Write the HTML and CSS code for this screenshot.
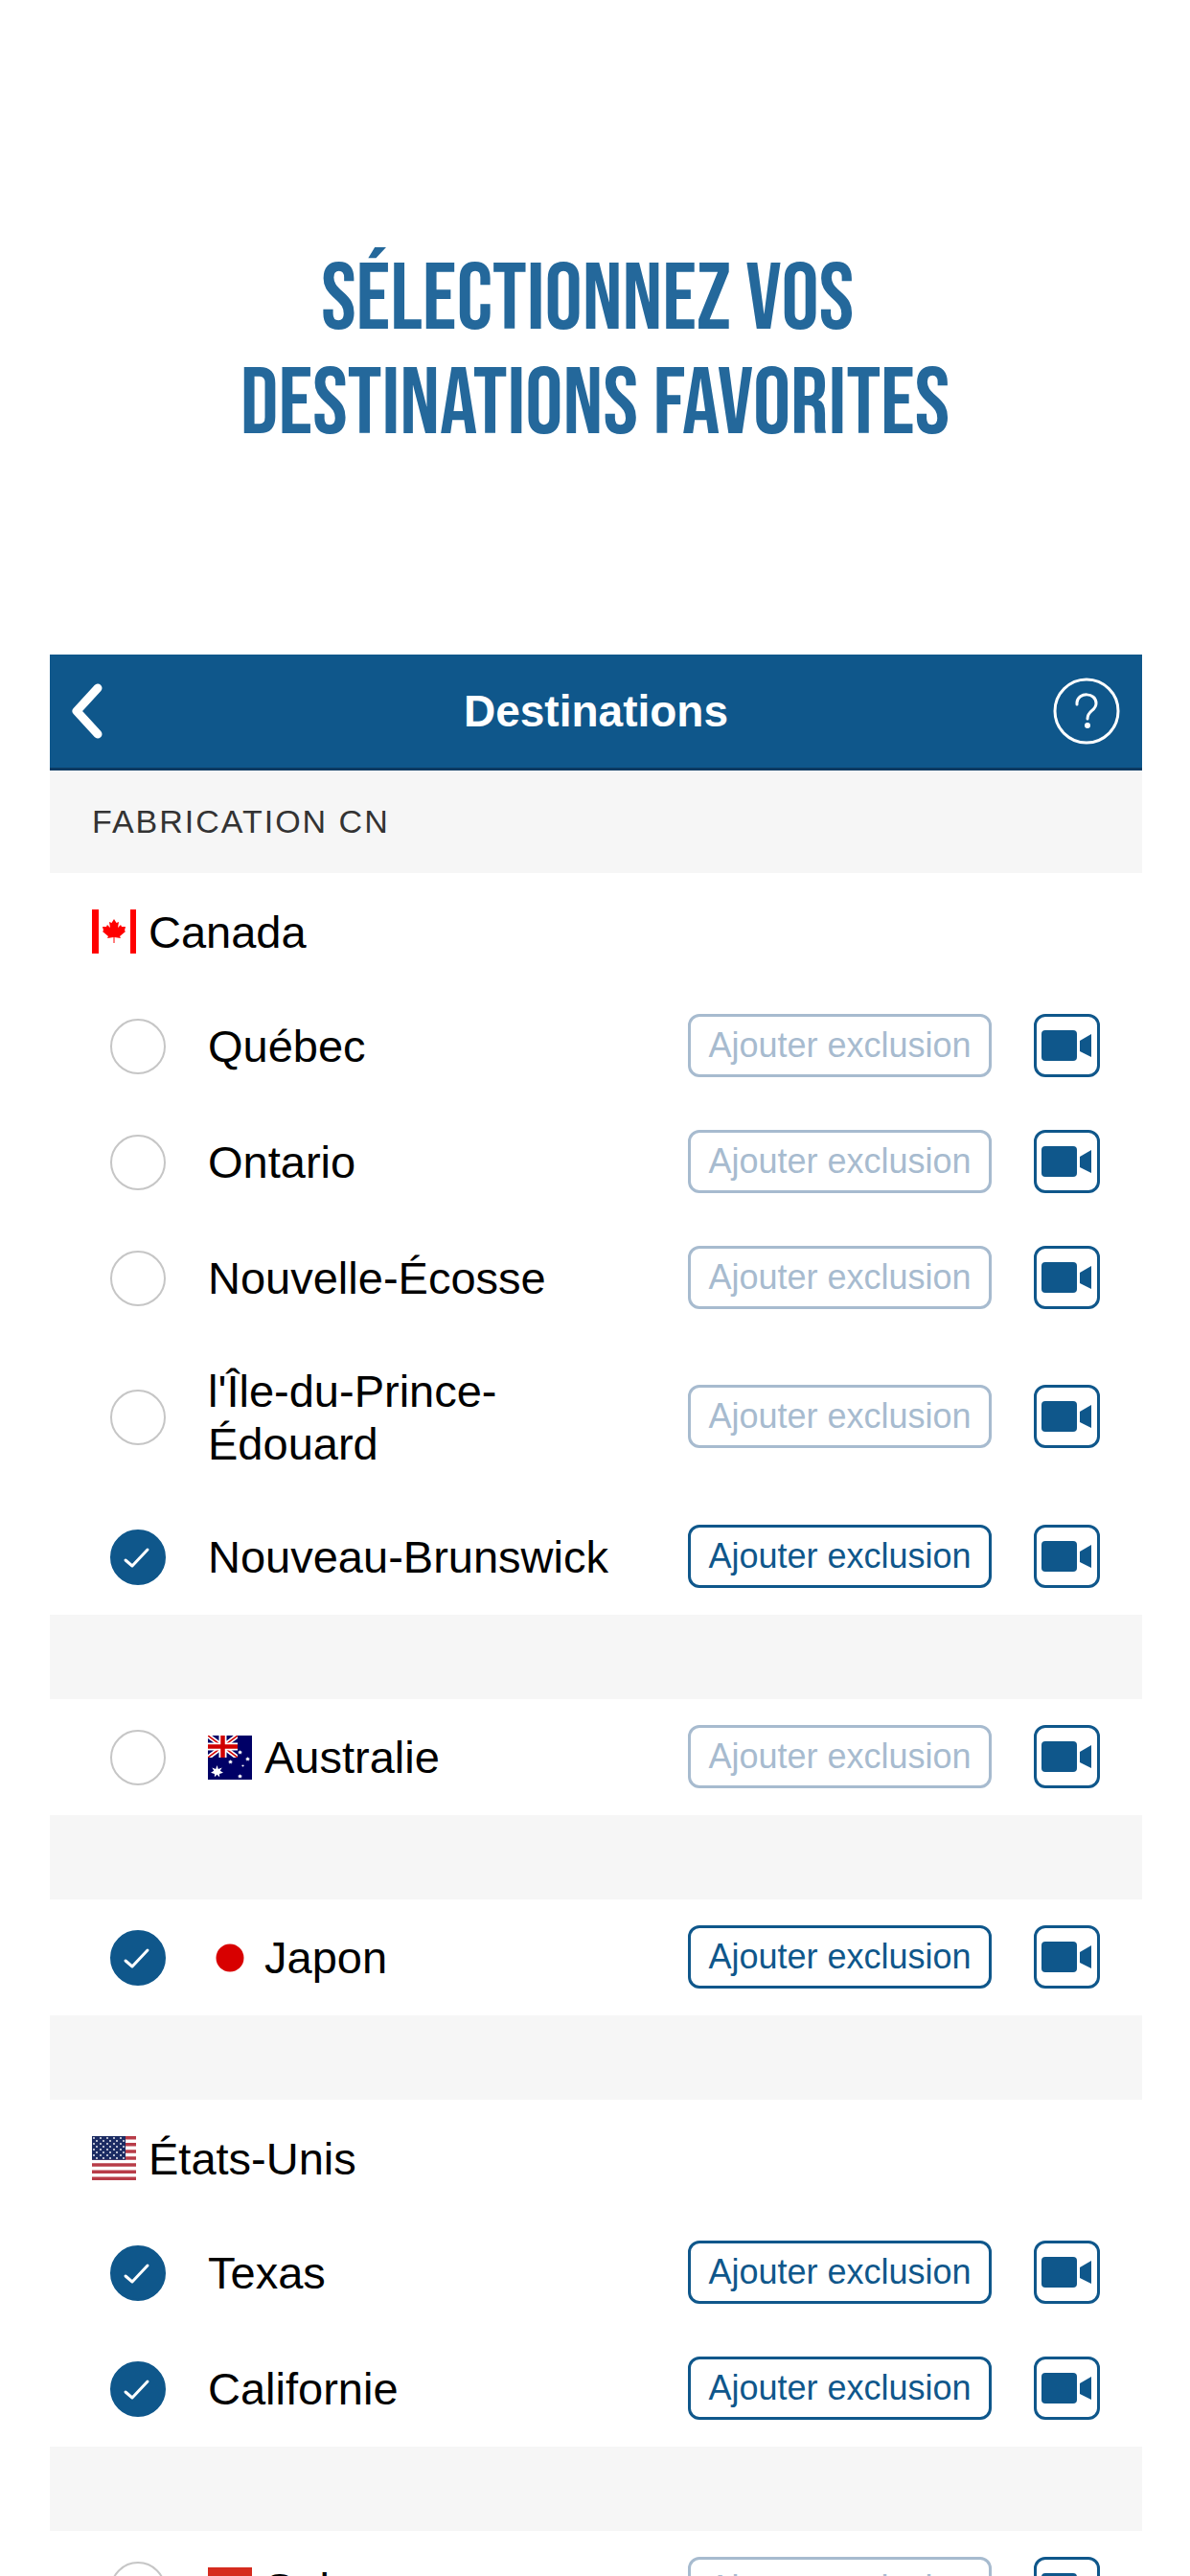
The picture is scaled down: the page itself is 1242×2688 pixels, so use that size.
FILE: index.html
```html
<!DOCTYPE html>
<html lang="fr">
<head>
    <meta charset="UTF-8">
    <meta name="viewport" content="width=device-width, initial-scale=1.0">
    <title>Destinations</title>
    <link rel="stylesheet" href="styles.css">
</head>
<body>
    <!-- Shared icons -->
    <svg class="sprite" aria-hidden="true">
        <symbol id="camera" viewBox="0 0 54 34">
            <rect x="0" y="1" width="37" height="32" rx="4"/>
            <path d="M40 12 L52 5 V29 L40 23 Z"/>
        </symbol>
        <symbol id="star" viewBox="-10 -10 20 20">
            <path d="M0 -10 L2 -4 L8 -6 L5 -1 L10 2 L4 4 L4 9 L0 5 L-4 9 L-4 4 L-10 2 L-5 -1 L-8 -6 L-2 -4 Z"/>
        </symbol>
        <pattern id="usStars" width="7" height="6" patternUnits="userSpaceOnUse">
            <circle cx="2" cy="2" r="0.9" fill="#fff"/>
            <circle cx="5" cy="5" r="0.9" fill="#fff"/>
        </pattern>
    </svg>

    <h1 class="headline">Sélectionnez vos&nbsp;<br>destinations favorites</h1>

    <main class="screen">
        <header class="navbar">
            <button class="nav-button back" aria-label="Retour">
                <svg width="36" height="60" viewBox="0 0 36 60"><path d="M27 6 L5 30 L27 54" fill="none" stroke="#fff" stroke-width="9" stroke-linecap="round" stroke-linejoin="round"/></svg>
            </button>
            <h2 class="navbar-title">Destinations</h2>
            <button class="nav-button" aria-label="Aide">
                <svg width="70" height="70" viewBox="0 0 70 70" fill="none" stroke="#fff" stroke-width="3">
                    <circle cx="35" cy="35" r="33"/>
                    <path d="M25 28 V26 C26 15 45 15 45 27 C45 35 36 34 36 43" stroke-linecap="round"/>
                    <circle cx="36" cy="50" r="3" fill="#fff" stroke="none"/>
                </svg>
            </button>
        </header>

        <h3 class="section-title">FABRICATION CN</h3>

        <!-- Canada -->
        <section class="group">
            <h4 class="country">
                <svg class="flag" viewBox="0 0 46 46">
                    <rect width="46" height="46" fill="#fff"/>
                    <path d="M0 0H7V46H0Z M40 0H46V46H40Z" fill="#f00"/>
                    <path d="M23 10 L25.500 14 L28 13 L27 19 L30 16 L31 18 L35 18 L34 22 L35 23 L29 28 L30 30 L23.500 29 V35 H22.500 V29 L16 30 L17 28 L11 23 L12 22 L11 18 L15 18 L16 16 L19 19 L18 13 L20.500 14 Z" fill="#f00"/>
                </svg>
                Canada
            </h4>
            <div class="row">
                <label class="choice"><input class="check" type="checkbox"><span>Québec</span></label>
                <button class="exclude" disabled>Ajouter exclusion</button>
                <button class="video" aria-label="Vidéo Québec"><svg class="camera"><use href="#camera"/></svg></button>
            </div>
            <div class="row">
                <label class="choice"><input class="check" type="checkbox"><span>Ontario</span></label>
                <button class="exclude" disabled>Ajouter exclusion</button>
                <button class="video" aria-label="Vidéo Ontario"><svg class="camera"><use href="#camera"/></svg></button>
            </div>
            <div class="row">
                <label class="choice"><input class="check" type="checkbox"><span>Nouvelle-Écosse</span></label>
                <button class="exclude" disabled>Ajouter exclusion</button>
                <button class="video" aria-label="Vidéo Nouvelle-Écosse"><svg class="camera"><use href="#camera"/></svg></button>
            </div>
            <div class="row">
                <label class="choice"><input class="check" type="checkbox"><span>l'Île-du-Prince-Édouard</span></label>
                <button class="exclude" disabled>Ajouter exclusion</button>
                <button class="video" aria-label="Vidéo l'Île-du-Prince-Édouard"><svg class="camera"><use href="#camera"/></svg></button>
            </div>
            <div class="row">
                <label class="choice"><input class="check" type="checkbox" checked><span>Nouveau-Brunswick</span></label>
                <button class="exclude">Ajouter exclusion</button>
                <button class="video" aria-label="Vidéo Nouveau-Brunswick"><svg class="camera"><use href="#camera"/></svg></button>
            </div>
        </section>

        <!-- Australie -->
        <section class="group">
            <div class="row">
                <label class="choice">
                    <input class="check" type="checkbox">
                    <svg class="flag" viewBox="0 0 46 46">
                        <rect width="46" height="46" fill="#006"/>
                        <svg width="31" height="23" viewBox="0 0 31 23">
                            <path d="M0 0 L31 23 M31 0 L0 23" stroke="#fff" stroke-width="5"/>
                            <path d="M0 0 L31 23 M31 0 L0 23" stroke="#d00000" stroke-width="1.500"/>
                            <path d="M15.500 0 V23 M0 11.500 H31" stroke="#fff" stroke-width="8"/>
                            <path d="M15.500 0 V23 M0 11.500 H31" stroke="#d00000" stroke-width="4.500"/>
                        </svg>
                        <g fill="#fff">
                            <use href="#star" x="3" y="31" width="13" height="13"/>
                            <use href="#star" x="31" y="15" width="5" height="5"/>
                            <use href="#star" x="21" y="25" width="5" height="5"/>
                            <use href="#star" x="39" y="22" width="5" height="5"/>
                            <use href="#star" x="35" y="30" width="3" height="3"/>
                            <use href="#star" x="31" y="40" width="5" height="5"/>
                        </g>
                    </svg>
                    <span>Australie</span>
                </label>
                <button class="exclude" disabled>Ajouter exclusion</button>
                <button class="video" aria-label="Vidéo Australie"><svg class="camera"><use href="#camera"/></svg></button>
            </div>
        </section>

        <!-- Japon -->
        <section class="group">
            <div class="row">
                <label class="choice">
                    <input class="check" type="checkbox" checked>
                    <svg class="flag" viewBox="0 0 46 46">
                        <rect width="46" height="46" fill="#fff"/>
                        <circle cx="23" cy="23" r="14.500" fill="#d80000"/>
                    </svg>
                    <span>Japon</span>
                </label>
                <button class="exclude">Ajouter exclusion</button>
                <button class="video" aria-label="Vidéo Japon"><svg class="camera"><use href="#camera"/></svg></button>
            </div>
        </section>

        <!-- États-Unis -->
        <section class="group">
            <h4 class="country">
                <svg class="flag" viewBox="0 0 46 46">
                    <rect width="46" height="46" fill="#fff"/>
                    <path d="M0 1.750H46 M0 8.850H46 M0 15.950H46 M0 23H46 M0 30.100H46 M0 37.200H46 M0 44.250H46" stroke="#b83c48" stroke-width="3.540"/>
                    <rect width="35" height="24.800" fill="#1c2c63"/>
                    <rect width="35" height="24" fill="url(#usStars)"/>
                </svg>
                États-Unis
            </h4>
            <div class="row">
                <label class="choice"><input class="check" type="checkbox" checked><span>Texas</span></label>
                <button class="exclude">Ajouter exclusion</button>
                <button class="video" aria-label="Vidéo Texas"><svg class="camera"><use href="#camera"/></svg></button>
            </div>
            <div class="row">
                <label class="choice"><input class="check" type="checkbox" checked><span>Californie</span></label>
                <button class="exclude">Ajouter exclusion</button>
                <button class="video" aria-label="Vidéo Californie"><svg class="camera"><use href="#camera"/></svg></button>
            </div>
        </section>

        <!-- Suisse -->
        <section class="group">
            <div class="row">
                <label class="choice">
                    <input class="check" type="checkbox">
                    <svg class="flag" viewBox="0 0 46 46">
                        <rect width="46" height="46" fill="#d52b1e"/>
                        <path d="M18 9H28V18H37V28H28V37H18V28H9V18H18Z" fill="#fff"/>
                    </svg>
                    <span>Suisse</span>
                </label>
                <button class="exclude" disabled>Ajouter exclusion</button>
                <button class="video" aria-label="Vidéo Suisse"><svg class="camera"><use href="#camera"/></svg></button>
            </div>
        </section>
    </main>
</body>
</html>
```
FILE: styles.css
```css
* {
    box-sizing: border-box;
}

html {
    height: 100%;
    overflow: hidden;
}

body {
    height: 100%;
    margin: 0;
    overflow: hidden;
    background-color: #ffffff;
    color: #000000;
    font-family: "Helvetica Neue", "Liberation Sans", Arial, sans-serif;
}

h1, h2, h3, h4 {
    margin: 0;
}

button {
    font-family: inherit;
    cursor: pointer;
}

.sprite {
    position: absolute;
    width: 0;
    height: 0;
}

.headline {
    padding: 259px 52px 206px;
    color: #24689b;
    font-family: "Bebas Neue", "Liberation Sans Narrow", "Liberation Sans", sans-serif;
    font-size: 98px;
    font-weight: normal;
    line-height: 109px;
    text-align: center;
    text-transform: uppercase;
}

.screen {
    margin: 0 50px 0 52px;
}

/* Top bar */
.navbar {
    display: flex;
    align-items: center;
    justify-content: space-between;
    height: 121px;
    padding: 0 23px;
    background-color: #0f578b;
    border-bottom: 3px solid #0b3a62;
}

.navbar-title {
    color: #ffffff;
    font-size: 46px;
    line-height: 55px;
}

.nav-button {
    display: flex;
    width: 70px;
    padding: 0;
    border: none;
    background: none;
}

.section-title {
    padding: 26px 44px;
    background-color: #f6f6f6;
    color: #333333;
    font-size: 34px;
    font-weight: normal;
    letter-spacing: 2px;
    line-height: 55px;
}

/* Destination groups */
.group + .group {
    border-top: 88px solid #f6f6f6;
}

.country {
    display: flex;
    align-items: center;
    gap: 13px;
    height: 120px;
    padding: 2px 44px 0;
    font-size: 47px;
    font-weight: normal;
    line-height: 55px;
}

.row {
    display: flex;
    align-items: center;
    min-height: 121px;
    padding: 0 44px 0 63px;
}

.choice {
    display: flex;
    flex: 1;
    align-items: center;
    gap: 13px;
    padding: 30px 0;
    font-size: 47px;
    line-height: 55px;
}

.check {
    flex: none;
    appearance: none;
    width: 58px;
    height: 58px;
    margin: 0 31px 0 0;
    border: 2px solid #c6c6c6;
    border-radius: 50%;
}

.check:checked {
    border-color: #0f578b;
    background: #0f578b url("data:image/svg+xml,%3Csvg xmlns='http://www.w3.org/2000/svg' viewBox='0 0 54 54'%3E%3Cpath d='M14 30 L21 36 L37 19' fill='none' stroke='white' stroke-width='3' stroke-linecap='round' stroke-linejoin='round'/%3E%3C/svg%3E") center / 54px no-repeat;
}

.flag {
    flex: none;
    width: 46px;
    height: 46px;
}

.exclude {
    flex: none;
    width: 317px;
    height: 66px;
    margin: 0 44px 2px 50px;
    padding: 0;
    border: 3px solid #0f578b;
    border-radius: 12px;
    background-color: #ffffff;
    color: #0f578b;
    font-size: 36px;
}

.exclude:disabled {
    border-color: #a7bbcf;
    color: #a7bbcf;
    cursor: default;
}

.video {
    display: flex;
    flex: none;
    align-items: center;
    justify-content: center;
    width: 69px;
    height: 66px;
    margin: 0 0 2px;
    padding: 0;
    border: 3px solid #0f578b;
    border-radius: 12px;
    background-color: #ffffff;
}

.camera {
    width: 54px;
    height: 34px;
    fill: #0f578b;
}
```
